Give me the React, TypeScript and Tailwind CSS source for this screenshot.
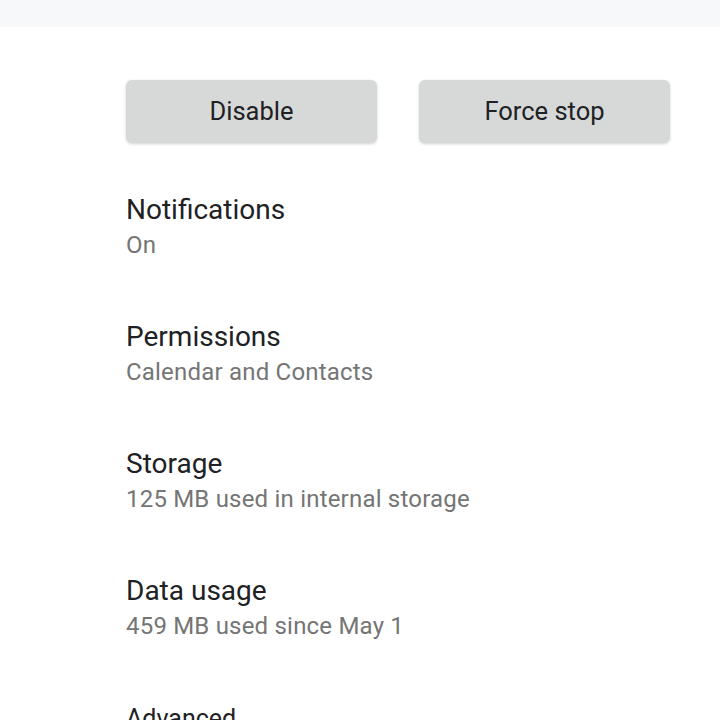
const rows = [
  { title: "Notifications", summary: "On" },
  { title: "Permissions", summary: "Calendar and Contacts" },
  { title: "Storage", summary: "125 MB used in internal storage" },
  { title: "Data usage", summary: "459 MB used since May 1" },
]

function ActionButton({ label }: { label: string }) {
  return (
    <button className="h-[63px] w-[251px] rounded-md bg-[#d7d9d8] text-[25.5px] text-[#202124] shadow-[0_1px_3px_rgba(0,0,0,0.18)]">
      {label}
    </button>
  )
}

export default function App() {
  return (
    <div className="h-[720px] w-[720px] overflow-hidden bg-white font-['Roboto','Liberation_Sans',sans-serif]">
      {/* header strip */}
      <div className="h-[27px] bg-[#f7f8fa]" />

      <div className="mt-[53px] flex gap-[42px] pl-[126px]">
        <ActionButton label="Disable" />
        <ActionButton label="Force stop" />
      </div>

      <div className="mt-[51px] flex flex-col gap-[62px] pl-[126px]">
        {rows.map(row => (
          <div key={row.title} className="flex flex-col">
            <span className="whitespace-nowrap text-[28px] leading-[32px] text-[#202124]">{row.title}</span>
            <span className="mt-[5px] whitespace-nowrap text-[24px] leading-[28px] tracking-[0.2px] text-[#757575]">{row.summary}</span>
          </div>
        ))}
        {/* expandable section, cut off by the viewport */}
        <div className="flex flex-col">
          <span className="whitespace-nowrap text-[25px] leading-[34px] text-[#202124]">Advanced</span>
        </div>
      </div>
    </div>
  )
}
